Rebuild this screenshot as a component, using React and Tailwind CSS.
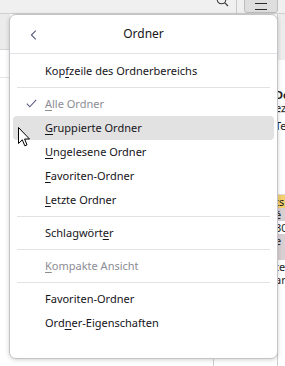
import React from 'react';

const font = { fontFamily: '"Segoe UI", "Noto Sans", sans-serif' };

const Accel = ({ text, at }) => {
  if (at < 0) return text;
  return (
    <>
      {text.slice(0, at)}
      <span className="underline underline-offset-2 decoration-1">{text[at]}</span>
      {text.slice(at + 1)}
    </>
  );
};

const Item = ({ label, at = -1, disabled, checked, active }) => (
  <div
    className={`relative mx-[3px] flex h-6 items-center rounded-[4px] pl-[32px] text-[11px] ${
      active ? 'bg-[#e2e2e2]' : ''
    } ${disabled ? 'text-[#8c8c94]' : 'text-[#15141a]'}`}
  >
    {checked && (
      <svg className="absolute left-[13px] top-[7px]" width="11" height="9" viewBox="0 0 11 9" fill="none">
        <path d="M0.8 4.6 L3.8 7.8 L10.2 0.8" stroke="#5b5a86" strokeWidth="1.1" />
      </svg>
    )}
    <span>
      <Accel text={label} at={at} />
    </span>
  </div>
);

const Sep = () => <div className="mx-[7px] my-1 h-px bg-[#e1e1e6]" />;

// thin strip of the window that peeks out right of the popup
const Peek = ({ h, bg = '', text = '', bold, border }) => (
  <div
    className={`overflow-hidden whitespace-nowrap text-[11px] leading-[13px] ${bg} ${bold ? 'font-bold' : ''} ${
      border ? 'border-b border-[#dcdcdc]' : ''
    }`}
    style={{ height: h }}
  >
    <span className="-ml-[3px]">{text}</span>
  </div>
);

const App = () => {
  return (
    <div className="relative h-[366px] w-[285px] overflow-hidden bg-white" style={font}>
      {/* toolbar behind */}
      <div className="relative flex h-[14px] items-start border-b border-[#cfcfcf] bg-[#f0f0f0]">
        <svg className="absolute left-[216px] top-[-6px]" width="13" height="13" viewBox="0 0 13 13" fill="none">
          <circle cx="5.5" cy="5.5" r="4.3" stroke="#3a3a3a" strokeWidth="1.1" />
          <path d="M8.6 8.6 L12 12" stroke="#3a3a3a" strokeWidth="1.2" />
        </svg>
        <div className="absolute left-[236px] top-0 h-[13px] w-px bg-[#c8c8c8]" />
        <div className="absolute left-[244px] top-[-2px] flex h-[15px] w-[34px] flex-col items-center justify-center gap-[5px] rounded-[3px] border border-[#bdbdbd] bg-[#dedede] pt-[1px]">
          <div className="h-px w-3 bg-[#2a2a2a]" />
          <div className="h-px w-3 bg-[#2a2a2a]" />
        </div>
      </div>

      {/* content behind */}
      <div className="flex h-[352px]">
        <div className="w-[10px] flex-none">
          <div className="h-[36px] border-b border-[#d6d6d6] bg-[#ebebeb]" />
          <div className="h-[28px] border-b border-[#e6e6e6]" />
        </div>
        <div className="flex-1">
          <div className="ml-[203px] mt-[344px] h-[8px] w-px bg-[#d0d0d0]" />
        </div>
        <div className="w-[8px] flex-none overflow-hidden border-l border-[#cfcfcf] text-[#1c1b22]">
          <Peek h={46} bg="bg-[#ececec]" />
          <Peek h={28} />
          <Peek h={13} text="Do" bold />
          <Peek h={12} text="ez" border />
          <Peek h={6} />
          <Peek h={14} text="Te" />
          <Peek h={62} border />
          <Peek h={13} bg="bg-[#f3cf6e]" text="ts" />
          <Peek h={13} bg="bg-[#d8cfd2]" text="é" />
          <Peek h={13} text="30" />
          <Peek h={13} bg="bg-[#d8cfd2]" text="e" />
          <Peek h={13} bg="bg-[#d8cfd2]" />
          <Peek h={13} text="te" />
          <Peek h={13} text="ar" />
        </div>
      </div>

      {/* popup menu */}
      <div className="absolute left-[9px] top-[14px] h-[345px] w-[269px] rounded-[7px] border border-[#c4c4c8] bg-white shadow-[0_1px_4px_rgba(0,0,0,0.18)]">
        <div className="relative flex h-[39px] items-center justify-center border-b border-[#e1e1e6]">
          <svg className="absolute left-[20px] top-[15px]" width="7" height="10" viewBox="0 0 7 10" fill="none">
            <path d="M5.8 0.6 L1.4 5 L5.8 9.4" stroke="#5b5a7e" strokeWidth="1.1" />
          </svg>
          <span className="text-[12px] text-[#15141a]">Ordner</span>
        </div>
        <div className="pt-[5px]">
          <Item label="Kopfzeile des Ordnerbereichs" at={3} />
          <Sep />
          <Item label="Alle Ordner" at={0} disabled checked />
          <Item label="Gruppierte Ordner" at={0} active />
          <Item label="Ungelesene Ordner" at={0} />
          <Item label="Favoriten-Ordner" at={0} />
          <Item label="Letzte Ordner" at={0} />
          <Sep />
          <Item label="Schlagwörter" at={10} />
          <Sep />
          <Item label="Kompakte Ansicht" at={0} disabled />
          <Sep />
          <Item label="Favoriten-Ordner" />
          <Item label="Ordner-Eigenschaften" at={3} />
        </div>
      </div>

      {/* mouse pointer */}
      <svg className="absolute left-[18px] top-[127px]" width="12" height="20" viewBox="0 0 12 20">
        <path
          d="M0.5 0.5 L0.5 16.5 L4.3 12.8 L6.8 18.8 L9 17.9 L6.6 12 L11.5 12 Z"
          fill="#ffffff"
          stroke="#000000"
          strokeWidth="1"
          strokeLinejoin="miter"
        />
      </svg>
    </div>
  );
};

export default App;
